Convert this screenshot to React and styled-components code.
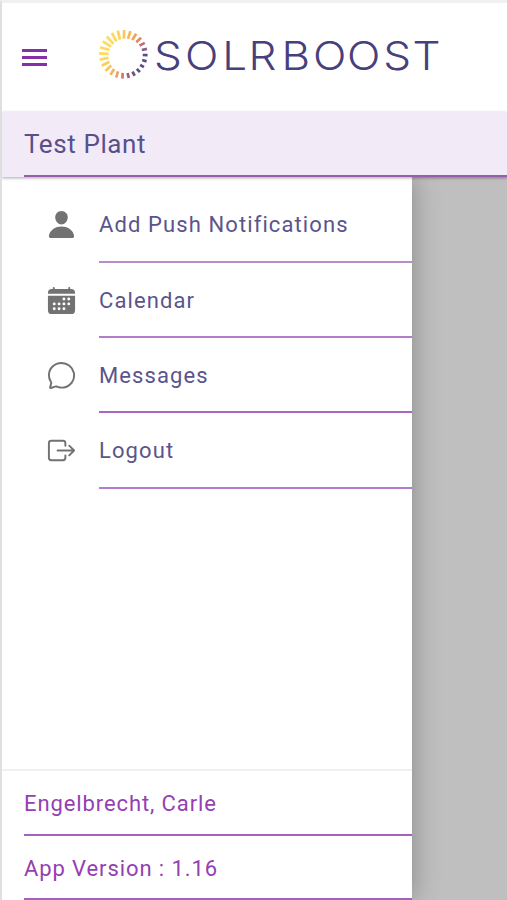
import React from 'react';
import styled, { createGlobalStyle } from 'styled-components';
import {
  IoPerson, IoCalendar, IoChatbubbleOutline, IoExitOutline,
} from 'react-icons/io5';

const GlobalStyle = createGlobalStyle`
  * {
    box-sizing: border-box;
  }

  body {
    margin: 0;
    background: #fff;
    font-family: Roboto, 'Liberation Sans', sans-serif;
  }
`;

const Screen = styled.div`
  width: 507px;
  height: 900px;
  overflow: hidden;

  display: flex;
  flex-direction: column;

  border-top: 3px solid #f0f0f1;
  border-left: 2px solid #dfdfe1;
  background: #fff;
`;

const Header = styled.header`
  height: 109px;
  flex: none;
  padding-left: 20px;

  display: flex;
  align-items: flex-start;
`;

const MenuButton = styled.button`
  width: 25px;
  height: 17px;
  margin: 46px 46px 0 0;
  padding: 0;
  border: 0;
  background: none;

  display: flex;
  flex-direction: column;
  justify-content: space-between;
`;

const MenuBar = styled.span`
  width: 25px;
  height: 3px;
  background: #8430a8;
`;

const LogoSvg = styled.svg`
  width: 350px;
  height: 60px;
  margin-top: 21px;
`;

const Wordmark = styled.text`
  font-family: Inter, sans-serif;
  font-size: 40px;
  font-weight: 300;
  fill: #48407c;
`;

const TitleBar = styled.div`
  position: relative;
  z-index: 2;
  height: 65px;
  flex: none;
  padding-left: 22px;

  display: flex;

  background: #f3eaf7;
  box-shadow: 0 1px 3px rgba(0, 0, 0, 0.35);
`;

const Title = styled.h1`
  flex: 1;
  margin: 0;
  border-bottom: 2px solid #9c5cae;

  font-size: 26px;
  font-weight: 400;
  line-height: 64px;
  letter-spacing: 0.6px;
  color: #57508a;
`;

const Body = styled.div`
  flex: 1;
  min-height: 0;

  display: flex;

  background: #bfbfbf;
`;

const Drawer = styled.nav`
  width: 410px;

  display: flex;
  flex-direction: column;

  background: #fff;
  box-shadow: 0 0 26px rgba(0, 0, 0, 0.3);
`;

const MenuList = styled.div`
  flex: 1;
  padding: 10px 0 0 44px;
`;

const MenuRow = styled.div`
  height: ${({ height }) => height}px;

  display: flex;
`;

const MenuIcon = styled.span`
  width: 53px;
  padding-top: 22px;
  font-size: 31px;
  line-height: 0;
  color: #727272;
`;

const MenuLabel = styled.span`
  flex: 1;
  border-bottom: 2px solid ${({ line }) => line};

  font-size: 22px;
  line-height: 76px;
  letter-spacing: 1.1px;
  color: #5b548c;
`;

const Footer = styled.footer`
  padding-left: 22px;
  border-top: 2px solid #f0f0f0;
`;

const FooterRow = styled.div`
  height: ${({ height }) => height}px;
  border-bottom: 2px solid #a561bc;

  font-size: 22px;
  line-height: 65px;
  letter-spacing: 0.9px;
  color: #9440b2;
`;

const rayColors = [
  '#5a4d82', '#5a4d82', '#5a4d82', '#5a4d82', '#6b5080', '#a35c80',
  '#d4737a', '#f0a060', '#f4b455', '#f8c455', '#fbcf58', '#fdd65c',
  '#fedb60', '#fedb60', '#fedb60', '#fedb60', '#fdd95c', '#fcd45c',
  '#fac858', '#f6b858', '#eda45c', '#e08a60', '#c8687c', '#86608a',
];

const Ray = ({ index, color }) => {
  const degrees = 2 + index * 15;
  const angle = (degrees * Math.PI) / 180;
  const length = 7.2 - 2.8 * Math.cos(((degrees - 35) * Math.PI) / 180);
  const point = (radius) => [30.3 + radius * Math.cos(angle), 30.3 + radius * Math.sin(angle)];
  const [x1, y1] = point(24.3 - length);
  const [x2, y2] = point(24.3);
  return <line x1={x1} y1={y1} x2={x2} y2={y2} stroke={color} strokeWidth="2.7" />;
};

const Logo = () => (
  <LogoSvg viewBox="0 0 350 60" role="img" aria-label="SOLRBOOST">
    {rayColors.map((color, index) => (
      <Ray key={index} index={index} color={color} />
    ))}
    <Wordmark transform="translate(61 46) scale(1.1 1)" x="0 28.2 62 86 116 144.5 175.5 208.5 235" y="0">
      SOLRBOOST
    </Wordmark>
  </LogoSvg>
);

const menuItems = [
  { label: 'Add Push Notifications', icon: IoPerson, height: 76, line: '#b98dc8' },
  { label: 'Calendar', icon: IoCalendar, height: 75, line: '#b47dc7' },
  { label: 'Messages', icon: IoChatbubbleOutline, height: 75, line: '#aa67bf' },
  { label: 'Logout', icon: IoExitOutline, height: 76, line: '#b27bd0' },
];

const App = () => (
  <>
    <GlobalStyle />
    <Screen>
      <Header>
        <MenuButton aria-label="Menu">
          <MenuBar />
          <MenuBar />
          <MenuBar />
        </MenuButton>
        <Logo />
      </Header>
      <TitleBar>
        <Title>Test Plant</Title>
      </TitleBar>
      <Body>
        <Drawer>
          <MenuList>
            {menuItems.map(({
              label, icon: Icon, height, line,
            }) => (
              <MenuRow key={label} height={height}>
                <MenuIcon><Icon /></MenuIcon>
                <MenuLabel line={line}>{label}</MenuLabel>
              </MenuRow>
            ))}
          </MenuList>
          <Footer>
            <FooterRow height={65}>Engelbrecht, Carle</FooterRow>
            <FooterRow height={64}>App Version : 1.16</FooterRow>
          </Footer>
        </Drawer>
      </Body>
    </Screen>
  </>
);

export default App;
